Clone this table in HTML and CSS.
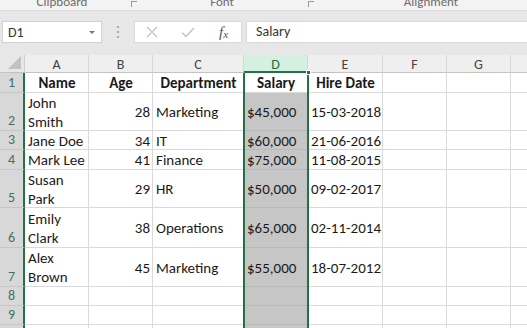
FILE: index.html
```html
<!DOCTYPE html>
<html>
<head>
<meta charset="utf-8">
<link rel="stylesheet" href="styles.css">
</head>
<body>
<div class="app">
  <div class="ribbon">
    <div class="grp g1"><span class="glabel">Clipboard</span><span class="launch"></span></div>
    <div class="grp g2"><span class="glabel">Font</span><span class="launch"></span></div>
    <div class="grp g3"><span class="glabel">Alignment</span></div>
  </div>
  <div class="fbar">
    <div class="namebox"><span>D1</span><span class="caret"></span></div>
    <div class="dots"><i></i><i></i><i></i></div>
    <div class="fxbox">
      <svg class="ico" width="14" height="14" viewBox="0 0 14 14"><path d="M2 2 L12 12 M12 2 L2 12" stroke="#c4c4c4" stroke-width="1.3" fill="none"/></svg>
      <svg class="ico" width="16" height="14" viewBox="0 0 16 14"><path d="M2 7.5 L6 11.5 L14 3" stroke="#c4c4c4" stroke-width="1.5" fill="none"/></svg>
      <span class="fx">f<sub>x</sub></span>
    </div>
    <div class="content">Salary</div>
  </div>
  <div class="sheet">
    <div class="corner"><span class="tri"></span></div>
    <div class="ch">A</div><div class="ch">B</div><div class="ch">C</div><div class="ch chsel">D</div><div class="ch">E</div><div class="ch">F</div><div class="ch">G</div><div class="ch last"></div>

    <div class="rh">1</div>
    <div class="c b ctr">Name</div><div class="c b ctr">Age</div><div class="c b ctr">Department</div><div class="c b ctr d1">Salary</div><div class="c b ctr">Hire Date</div><div class="c"></div><div class="c"></div><div class="c last"></div>

    <div class="rh">2</div>
    <div class="c">John<br>Smith</div><div class="c r">28</div><div class="c">Marketing</div><div class="c d">$45,000</div><div class="c">15-03-2018</div><div class="c"></div><div class="c"></div><div class="c last"></div>

    <div class="rh">3</div>
    <div class="c">Jane Doe</div><div class="c r">34</div><div class="c">IT</div><div class="c d">$60,000</div><div class="c">21-06-2016</div><div class="c"></div><div class="c"></div><div class="c last"></div>

    <div class="rh">4</div>
    <div class="c">Mark Lee</div><div class="c r">41</div><div class="c">Finance</div><div class="c d">$75,000</div><div class="c">11-08-2015</div><div class="c"></div><div class="c"></div><div class="c last"></div>

    <div class="rh">5</div>
    <div class="c">Susan<br>Park</div><div class="c r">29</div><div class="c">HR</div><div class="c d">$50,000</div><div class="c">09-02-2017</div><div class="c"></div><div class="c"></div><div class="c last"></div>

    <div class="rh">6</div>
    <div class="c">Emily<br>Clark</div><div class="c r">38</div><div class="c">Operations</div><div class="c d">$65,000</div><div class="c">02-11-2014</div><div class="c"></div><div class="c"></div><div class="c last"></div>

    <div class="rh">7</div>
    <div class="c">Alex<br>Brown</div><div class="c r">45</div><div class="c">Marketing</div><div class="c d">$55,000</div><div class="c">18-07-2012</div><div class="c"></div><div class="c"></div><div class="c last"></div>

    <div class="rh">8</div>
    <div class="c"></div><div class="c"></div><div class="c"></div><div class="c d"></div><div class="c"></div><div class="c"></div><div class="c"></div><div class="c last"></div>

    <div class="rh">9</div>
    <div class="c"></div><div class="c"></div><div class="c"></div><div class="c d"></div><div class="c"></div><div class="c"></div><div class="c"></div><div class="c last"></div>

    <div class="rh">10</div>
    <div class="c"></div><div class="c"></div><div class="c"></div><div class="c d"></div><div class="c"></div><div class="c"></div><div class="c"></div><div class="c last"></div>

    <div class="selbox"><span class="handle"></span></div>
  </div>
</div>
</body>
</html>
```
FILE: styles.css
```css
* { box-sizing: border-box; }
html, body { margin: 0; padding: 0; }
body {
  width: 527px;
  height: 328px;
  overflow: hidden;
  background: #ffffff;
  font-family: "Carlito", "Lato", "Liberation Sans", sans-serif;
}
.app { width: 527px; height: 328px; overflow: hidden; display: flex; flex-direction: column; }

/* ribbon labels */
.ribbon {
  height: 11px;
  flex: none;
  display: flex;
  background: #f3f3f3;
  border-bottom: 1px solid #dcdcdc;
  overflow: hidden;
  color: #6d6d6d;
  font-size: 13px;
}
.grp { display: flex; align-items: flex-start; flex: none; }
.glabel { display: block; text-align: center; line-height: 13px; margin-top: -5px; }
.g1 { width: 142px; }
.g1 .glabel { width: 124px; }
.g2 { width: 176px; }
.g2 .glabel { width: 160px; }
.g3 { width: 226px; }
.g3 .glabel { width: 226px; }
.launch {
  width: 6px; height: 6px; margin-top: 1px; margin-left: 7px;
  border-left: 1px solid #9a9a9a; border-top: 1px solid #9a9a9a;
}
.g2 .launch { margin-left: 6px; }

/* formula bar */
.fbar {
  height: 44px;
  flex: none;
  background: #e7e7e7;
  display: flex;
  align-items: flex-start;
  padding-top: 10px;
}
.namebox {
  margin-left: 2px;
  width: 100px; height: 22px;
  background: #fff;
  border: 1px solid #d2d2d2;
  display: flex; align-items: center; justify-content: space-between;
  padding: 0 6px 0 5px;
  font-size: 14px; color: #333;
}
.caret {
  width: 0; height: 0;
  border-left: 3px solid transparent; border-right: 3px solid transparent;
  border-top: 3px solid #777;
}
.dots { width: 32px; height: 22px; display: flex; flex-direction: column; align-items: center; justify-content: center; gap: 3px; }
.dots i { width: 2px; height: 2px; background: #a9a9a9; display: block; }
.fxbox {
  width: 108px; height: 22px;
  background: #fff;
  border: 1px solid #dadada;
  display: flex; align-items: center;
  padding-left: 10px;
  gap: 21px;
}
.fx { font-family: "Liberation Serif", serif; font-style: italic; font-size: 15px; color: #555; margin-left: 2px; }
.fx sub { font-size: 11px; vertical-align: -1px; }
.content {
  margin-left: 4px;
  flex: 1;
  height: 22px;
  background: #fff;
  border: 1px solid #dadada;
  border-right: none;
  font-size: 14px; color: #333;
  padding-left: 9px;
  line-height: 20px;
}

/* sheet */
.sheet {
  flex: 1;
  position: relative;
  display: grid;
  grid-template-columns: 25px 64px 64px 91px 64px 75px 64px 64px 1fr;
  grid-template-rows: 18px 20px 38px 19px 20px 38px 40px 39px 19px 19px 1fr;
  background: #fff;
}
.corner {
  background: #e7e7e7;
  border-bottom: 1px solid #c3c3c3;
  border-right: 1px solid #d0d0d0;
  display: flex; justify-content: flex-end; align-items: flex-end;
  padding: 0 3px 3px 0;
}
.tri {
  width: 0; height: 0;
  border-left: 13px solid transparent;
  border-bottom: 13px solid #c2c2c2;
}
.ch {
  background: #efefef;
  border-bottom: 1px solid #c3c3c3;
  border-right: 1px solid #d6d6d6;
  font-size: 14px; color: #444;
  text-align: center; line-height: 18px;
  padding-top: 1px;
}
.ch.last { border-right: none; }
.chsel {
  background: #d3f0e0;
  color: #1e6b41;
  border-bottom: 2px solid #217346;
}
.rh {
  background: #d8d8d8;
  border-right: 2px solid #217346;
  border-bottom: 1px solid #c6c6c6;
  color: #42715a;
  font-size: 14px;
  display: flex; align-items: flex-end; justify-content: center;
  padding-bottom: 1px;
  line-height: 17px;
}
.c {
  border-right: 1px solid #dadada;
  border-bottom: 1px solid #dadada;
  font-size: 15px;
  color: #1a1a1a;
  line-height: 19px;
  display: flex; align-items: center;
  padding: 2px 2px 0 3px;
  white-space: nowrap;
}
.c.last { border-right: none; }
.c.b { font-weight: bold; }
.c.ctr { justify-content: center; }
.c.r { justify-content: flex-end; }
.c.d { background: #c6c6c6; border-bottom-color: #b9b9b9; }
.c.d1 { background: #fff; }

.selbox {
  position: absolute;
  grid-column: 5 / 6;
  grid-row: 2 / -1;
  top: 0; bottom: 0;
  left: -1px; right: -1px;
  border-left: 2px solid #217346;
  border-right: 2px solid #217346;
  pointer-events: none;
}
.handle {
  position: absolute;
  right: -4px; top: -3px;
  width: 5px; height: 5px;
  background: #217346;
  border: 1px solid #fff;
}
```
